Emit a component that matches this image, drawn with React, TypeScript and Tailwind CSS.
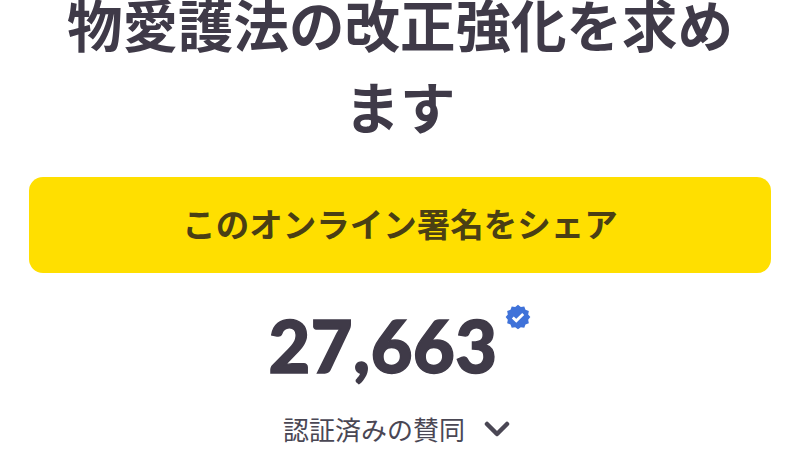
import React from 'react';
import { ChevronDown } from 'lucide-react';

const font = { fontFamily: '"Noto Sans CJK JP", "Noto Sans", sans-serif' };

const App: React.FC = () => {
    return (
        <div className="w-[800px] h-[450px] overflow-hidden bg-white flex flex-col items-center text-[#3f3a48]">
            <h1 className="mt-[-18px] w-[680px] shrink-0 text-center text-[55.5px] leading-[82px] font-bold" style={font}>
                物愛護法の改正強化を求めます
            </h1>
            <button className="mt-[31px] w-[742px] h-[96px] shrink-0 rounded-[14px] bg-[#ffdf00] pb-[3px] text-[33.5px] font-bold text-[#4a3f14]" style={font}>
                このオンライン署名をシェア
            </button>
            <div className="mt-[28px] flex items-start gap-[8px] shrink-0">
                <div className="text-[72px] leading-[88px] font-black font-['Lato',sans-serif] tracking-[0.5px] [-webkit-text-stroke:1.5px_#3f3a48]">27,663</div>
                <svg className="mt-[3px] w-[26px] h-[26px]" viewBox="0 0 24 24">
                    <path fill="#3f72d9" d="M12 .8l2.6 2 3.2-.6 1.1 3.1 3.1 1.1-.6 3.2 2 2.4-2 2.6.6 3.2-3.1 1.1-1.1 3.1-3.2-.6-2.6 2-2.6-2-3.2.6-1.1-3.1-3.1-1.1.6-3.2-2-2.6 2-2.4-.6-3.2 3.1-1.1 1.1-3.1 3.2.6z" />
                    <path fill="none" stroke="#fff" strokeWidth="2.6" d="M7.2 12.4l3.2 3 6.4-6.2" />
                </svg>
            </div>
            <div className="mt-[20px] flex items-center gap-[12px] text-[26px] leading-[40px] text-[#4a4754] shrink-0" style={font}>
                <span>認証済みの賛同</span>
                <ChevronDown size={40} strokeWidth={2.7} />
            </div>
        </div>
    );
};

export default App;
